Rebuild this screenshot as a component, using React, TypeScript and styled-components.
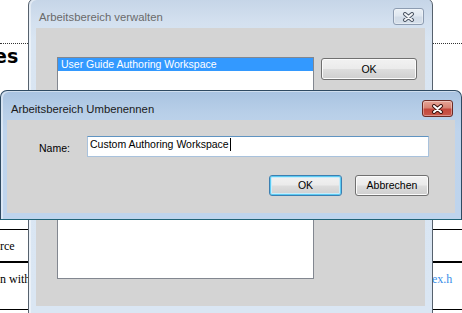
import React from 'react';
import styled, { createGlobalStyle } from 'styled-components';

const GlobalStyle = createGlobalStyle`
  html, body {
    margin: 0;
    padding: 0;
    background: #ffffff;
    overflow: hidden;
  }
`;

const Screen = styled.div`
  position: relative;
  width: 462px;
  height: 313px;
  overflow: hidden;
  background: #ffffff;
  font-family: 'Liberation Sans', Arial, sans-serif;
`;

// document lying under the dialogs
const Doc = styled.div`
  display: flex;
  flex-direction: column;
  width: 462px;
`;

const DottedRule = styled.div`
  height: 43px;
  border-bottom: 1px dotted #333333;
`;

const Heading = styled.div`
  margin: 2px 0 0 -6px;
  font-family: 'DejaVu Sans', sans-serif;
  font-weight: bold;
  font-size: 19px;
  line-height: 20px;
  color: #000000;
`;

const Table = styled.div`
  margin-top: 163px;
  border-top: 1px solid #000000;
  display: flex;
  flex-direction: column;
`;

const TableRow = styled.div<{ $height: number; $rule: number; $padTop?: number }>`
  display: flex;
  justify-content: space-between;
  align-items: ${(p) => (p.$padTop ? 'flex-start' : 'center')};
  height: ${(p) => p.$height}px;
  padding-top: ${(p) => p.$padTop || 0}px;
  box-sizing: border-box;
  border-bottom: ${(p) => p.$rule}px solid #000000;
  font-family: 'Liberation Serif', 'Times New Roman', serif;
  font-size: 12px;
  line-height: 14px;
`;

const Cell = styled.div<{ $link?: boolean }>`
  width: 30px;
  overflow: hidden;
  white-space: nowrap;
  color: ${(p) => (p.$link ? '#3a8ee8' : '#000000')};
`;

// windows
const Window = styled.div<{ $active?: boolean }>`
  position: absolute;
  box-sizing: border-box;
  display: flex;
  flex-direction: column;
  border: 1px solid ${(p) => (p.$active ? '#2f4a62' : '#56616d')};
  border-bottom-color: ${(p) => (p.$active ? '#1f6478' : '#56616d')};
  border-radius: 7px 7px 0 0;
  background: ${(p) =>
    p.$active
      ? 'linear-gradient(180deg, #a9c3e1 0px, #b8cfe8 22px, #bfd4ec 40px, #bed4ed 100%)'
      : 'linear-gradient(180deg, #c5d5e7 0px, #d3e0ef 22px, #d9e5f2 40px, #dae6f3 100%)'};
  box-shadow: inset 2px 1px 0 rgba(255, 255, 255, 0.45);
`;

const ManageWindow = styled(Window)`
  left: 28px;
  top: -2px;
  width: 405px;
  height: 316px;
`;

const RenameWindow = styled(Window)`
  left: 0;
  top: 90px;
  width: 462px;
  height: 130px;
`;

const TitleBar = styled.div`
  display: flex;
  justify-content: space-between;
  align-items: flex-start;
  height: 29px;
  flex-shrink: 0;
  box-sizing: border-box;
  padding: 9px 8px 0 10px;
`;

const Title = styled.div<{ $active?: boolean }>`
  margin-top: 1px;
  font-size: 11.3px;
  line-height: 16px;
  color: ${(p) => (p.$active ? '#1a1a1a' : '#6a6a6a')};
`;

const CloseButton = styled.div<{ $active?: boolean }>`
  display: flex;
  align-items: center;
  justify-content: center;
  width: 31px;
  height: 17px;
  box-sizing: border-box;
  border-radius: 3px;
  border: 1px solid ${(p) => (p.$active ? '#6b2a24' : '#8d9cb1')};
  background: ${(p) =>
    p.$active
      ? 'linear-gradient(180deg, #e6a597 0%, #d88474 45%, #c4473b 55%, #c9584b 100%)'
      : 'linear-gradient(180deg, #eaf0f6 0%, #dfe7f0 45%, #d2dce8 55%, #d6e0eb 100%)'};
  box-shadow: inset 0 0 0 1px rgba(255, 255, 255, 0.35);
`;

const Client = styled.div<{ $frame: number }>`
  flex: 1;
  margin: 0 ${(p) => p.$frame}px ${(p) => p.$frame}px;
  background: #d4d4d4;
  font-size: 10.5px;
  line-height: 13px;
  color: #000000;
`;

const ManageBody = styled(Client)`
  display: flex;
  align-items: flex-start;
  gap: 7px;
  padding: 29px 0 0 21px;
`;

const ListBox = styled.div`
  width: 257px;
  height: 222px;
  box-sizing: border-box;
  border: 1px solid #828790;
  background: #ffffff;
`;

const ListItem = styled.div<{ $selected?: boolean }>`
  height: 13px;
  padding-left: 3px;
  background: ${(p) => (p.$selected ? '#3399ff' : 'transparent')};
  color: ${(p) => (p.$selected ? '#ffffff' : '#000000')};
  white-space: nowrap;
`;

const Button = styled.div<{ $width: number; $height?: number; $default?: boolean }>`
  display: flex;
  align-items: center;
  justify-content: center;
  width: ${(p) => p.$width}px;
  height: ${(p) => p.$height || 21}px;
  box-sizing: border-box;
  border-radius: 3px;
  border: 1px solid ${(p) => (p.$default ? '#3c7fb1' : '#707070')};
  background: linear-gradient(180deg, #f2f2f2 0%, #ebebeb 48%, #dddddd 52%, #cfcfcf 100%);
  box-shadow: ${(p) =>
    p.$default
      ? 'inset 0 0 0 1px #5ccbf3, inset 0 0 0 2px #c9ecfa'
      : 'inset 0 0 0 1px #fbfbfb'};
  font-size: 10.5px;
  color: #000000;
`;

const ManageOk = styled(Button)`
  margin-top: 1px;
`;

const RenameBody = styled(Client)`
  display: flex;
  flex-direction: column;
  padding: 16px 0 0 32px;
`;

const FieldRow = styled.div`
  display: flex;
  align-items: flex-start;
`;

const Label = styled.div`
  width: 48px;
  margin-top: 6px;
`;

const TextBox = styled.div`
  display: flex;
  align-items: flex-start;
  width: 342px;
  height: 21px;
  box-sizing: border-box;
  padding: 1px 2px 0;
  border: 1px solid #a9c2dc;
  border-top-color: #5f93c1;
  background: #ffffff;
  white-space: nowrap;
`;

const Caret = styled.span`
  display: inline-block;
  width: 1px;
  height: 13px;
  margin-left: 1px;
  background: #000000;
`;

const ButtonRow = styled.div`
  display: flex;
  justify-content: flex-end;
  gap: 13px;
  width: 390px;
  margin-top: 18px;
`;

const CloseGlyph = ({ active }: { active?: boolean }) => (
  <svg width="13" height="10" viewBox="0 0 13 10">
    <path
      d="M3 2 L10 8 M10 2 L3 8"
      stroke={active ? '#3d1410' : '#4d5866'}
      strokeWidth="4"
      strokeLinecap="round"
      fill="none"
    />
    <path
      d="M3 2 L10 8 M10 2 L3 8"
      stroke={active ? '#ffffff' : '#f4f6f9'}
      strokeWidth="2"
      strokeLinecap="round"
      fill="none"
    />
  </svg>
);

const App = () => {
  return (
    <Screen>
      <GlobalStyle />
      <Doc>
        <DottedRule />
        <Heading>es</Heading>
        <Table>
          <TableRow $height={33} $rule={2}>
            <Cell>rce</Cell>
            <Cell />
          </TableRow>
          <TableRow $height={47} $rule={1} $padTop={9}>
            <Cell>n with</Cell>
            <Cell $link>ex.h</Cell>
          </TableRow>
        </Table>
      </Doc>

      <ManageWindow>
        <TitleBar>
          <Title>Arbeitsbereich verwalten</Title>
          <CloseButton>
            <CloseGlyph />
          </CloseButton>
        </TitleBar>
        <ManageBody $frame={7}>
          <ListBox>
            <ListItem $selected>User Guide Authoring Workspace</ListItem>
          </ListBox>
          <ManageOk $width={96} $height={22}>OK</ManageOk>
        </ManageBody>
      </ManageWindow>

      <RenameWindow $active>
        <TitleBar>
          <Title $active>Arbeitsbereich Umbenennen</Title>
          <CloseButton $active>
            <CloseGlyph active />
          </CloseButton>
        </TitleBar>
        <RenameBody $frame={6}>
          <FieldRow>
            <Label>Name:</Label>
            <TextBox>
              Custom Authoring Workspace
              <Caret />
            </TextBox>
          </FieldRow>
          <ButtonRow>
            <Button $width={73} $default>
              OK
            </Button>
            <Button $width={74}>Abbrechen</Button>
          </ButtonRow>
        </RenameBody>
      </RenameWindow>
    </Screen>
  );
};

export default App;
